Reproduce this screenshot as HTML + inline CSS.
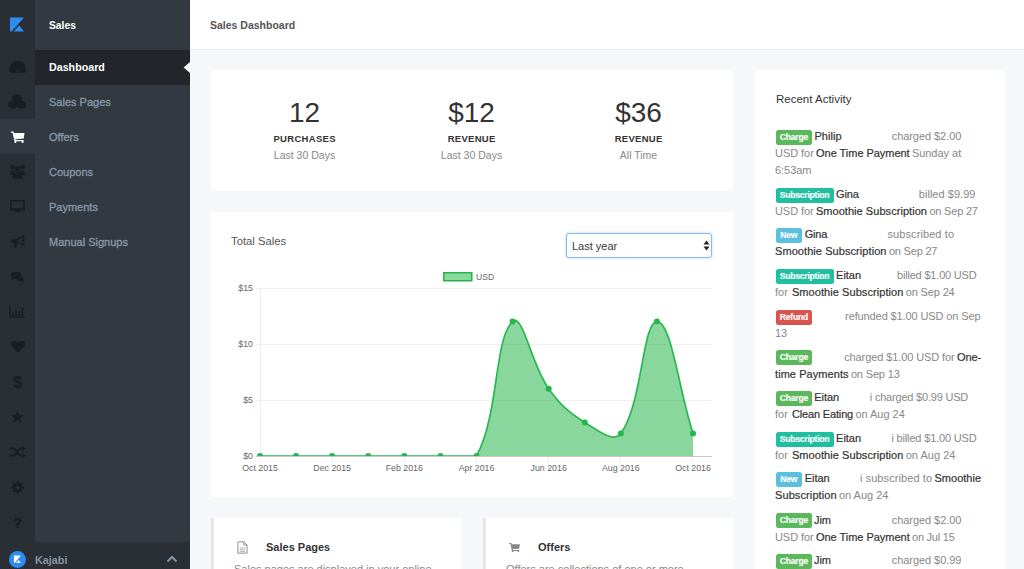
<!DOCTYPE html>
<html><head><meta charset="utf-8">
<style>
*{margin:0;padding:0;box-sizing:border-box}
html,body{width:1024px;height:569px;overflow:hidden;background:#f6f7f8;font-family:"Liberation Sans",sans-serif}
.abs{position:absolute}
#icons{left:0;top:0;width:35px;height:569px;background:#2a2e35}
#sub{left:35px;top:0;width:155px;height:569px;background:#323940}
#activeicon{left:0;top:119px;width:35px;height:35px;background:#323940}
#activerow{left:35px;top:50px;width:155px;height:35px;background:#22262a}
#bottombar{left:0;top:542px;width:190px;height:27px;background:#2a2e35}
.subitem{position:absolute;left:49px;font-size:11px;font-weight:400;color:#8796a6;white-space:nowrap;line-height:12px;-webkit-text-stroke:0.35px #8796a6}
.ico{position:absolute;left:10px;width:15px;height:15px}
#header{left:190px;top:0;width:834px;height:50px;background:#fff;border-bottom:1px solid #eef0f1}
.card{position:absolute;background:#fff;border-radius:2px}
.txt{position:absolute;white-space:nowrap;line-height:12px}
.stat-num{font-size:28px;color:#333;line-height:30px;margin-top:1.5px;text-align:center;width:167px}
.stat-lbl{font-size:9.5px;font-weight:700;color:#333;text-align:center;width:167px;letter-spacing:0.3px;text-indent:0.3px}
.stat-sub{font-size:10.5px;color:#888;text-align:center;width:167px}
.lab{position:absolute;height:15px;margin-top:-0.4px;border-radius:2.5px;color:#fff;font-weight:700;font-size:8.6px;letter-spacing:-0.25px;line-height:15px;text-align:center;-webkit-text-stroke:0.15px #fff}
.g{background:#5cb85c}.t{background:#1fbf9f}.b{background:#5bc0de}.r{background:#d9534f}
.al{position:absolute;font-size:11px;color:#888;white-space:nowrap;line-height:12px}
.al.dk{color:#333;-webkit-text-stroke:0.2px #333}
.ax{font-size:8.8px;color:#666;line-height:10px}
</style></head>
<body>
<div id="icons" class="abs"></div>
<div id="sub" class="abs"></div>
<div id="activeicon" class="abs"></div>
<div id="activerow" class="abs"></div>
<div id="bottombar" class="abs"></div>

<!-- logo -->
<svg class="abs" style="left:0;top:0" width="35" height="50" viewBox="0 0 35 50">
  <polygon points="10,17.4 24,17.4 11.6,31.6 10,31.6" fill="#2b8ef0"/>
  <polygon points="13.6,31.6 24,31.6 19.2,25.6" fill="#2b8ef0"/>
</svg>

<div class="txt" style="left:49px;top:20px;font-size:10.3px;font-weight:700;color:#fff">Sales</div>
<div class="txt" style="left:49px;top:61px;font-size:10.7px;font-weight:700;color:#fff">Dashboard</div>
<svg class="abs" style="left:183px;top:62px" width="7" height="11"><polygon points="7,0 7,11 0.7,5.5" fill="#fff"/></svg>
<div class="subitem" style="top:96px">Sales Pages</div>
<div class="subitem" style="top:131px">Offers</div>
<div class="subitem" style="top:166px">Coupons</div>
<div class="subitem" style="top:201px">Payments</div>
<div class="subitem" style="top:236px">Manual Signups</div>

<!-- bottom bar -->
<div class="abs" style="left:9px;top:551px;width:17px;height:17px;border-radius:50%;background:#2b8ef0"></div>
<svg class="abs" style="left:9px;top:551px" width="17" height="17"><polygon points="5,4.5 12,4.5 5.6,12 5,12" fill="#fff"/><polygon points="7,12 12,12 9.5,9" fill="#fff"/></svg>
<div class="txt" style="left:35px;top:553.5px;font-size:10.8px;font-weight:700;color:#8796a5">Kajabi</div>
<svg class="abs" style="left:166px;top:555px" width="12" height="8"><polyline points="1.5,6.5 6,2 10.5,6.5" fill="none" stroke="#8796a5" stroke-width="2"/></svg>

<!-- icons placeholder -->
<svg class="abs" style="left:0;top:0" width="35" height="569" viewBox="0 0 35 569">
 <g fill="#1a1d22">
  <!-- tachometer -->
  <path d="M10.1,72.7 A8.2,8.2 0 1,1 24.9,72.7 Z"/>
  <!-- cubes -->
  <path d="M17,94 L21.7,96 L21.7,100.2 L17,102.2 L12.3,100.2 L12.3,96 Z"/>
  <path d="M13.1,100.5 L17.8,102.5 L17.8,106.7 L13.1,108.7 L8.399999999999999,106.7 L8.399999999999999,102.5 Z"/>
  <path d="M21.4,100.5 L26.099999999999998,102.5 L26.099999999999998,106.7 L21.4,108.7 L16.7,106.7 L16.7,102.5 Z"/>
  <!-- users -->
  <circle cx="12.5" cy="167" r="2.3"/><circle cx="22.5" cy="167" r="2.3"/><circle cx="17.5" cy="169" r="2.8"/>
  <path d="M9.7,175 Q9.7,170.5 12.5,170.5 Q14.5,170.5 14.8,172 L14.8,174.5 Z"/>
  <path d="M25.3,175 Q25.3,170.5 22.5,170.5 Q20.5,170.5 20.2,172 L20.2,174.5 Z"/>
  <path d="M12.6,178.8 L12.6,175.5 Q12.6,172.5 15.5,172.3 L19.5,172.3 Q22.4,172.5 22.4,175.5 L22.4,178.8 Z"/>
  <!-- desktop -->
  <path d="M10,200 L25,200 L25,210.5 L19.5,210.5 L20,212.3 L15,212.3 L15.5,210.5 L10,210.5 Z M11.6,201.5 L11.6,208.2 L23.4,208.2 L23.4,201.5 Z" fill-rule="evenodd"/>
  <!-- bullhorn -->
  <path d="M10.8,239.5 L14.5,239.5 L23.2,235.8 L24.2,235.8 L24.2,245.5 L23.2,245.5 L17,242.8 L16.5,247.5 L14.5,247.5 L13.5,243 L10.8,243 Z M17.5,240 L17.5,242 L22.6,244 L22.6,237.5 Z" fill-rule="evenodd"/>
  <!-- comments -->
  <ellipse cx="16" cy="275.5" rx="5.4" ry="3.8"/>
  <path d="M11.5,281 L13.2,277.5 L15.5,278.5 Z"/>
  <path d="M21.6,276.5 A4,3.2 0 0,1 23.4,280.5 L24.7,282.5 L21.3,281.5 A5,3 0 0,1 17,279.8 A6.5,4.8 0 0,0 21.6,276.5 Z"/>
  <!-- bar chart -->
  <path d="M9.4,306.2 L10.8,306.2 L10.8,316.4 L25.2,316.4 L25.2,317.8 L9.4,317.8 Z"/>
  <rect x="12.2" y="312.5" width="1.8" height="3.9"/>
  <rect x="15.2" y="309.5" width="1.8" height="6.9"/>
  <rect x="18.4" y="311" width="1.8" height="5.4"/>
  <rect x="21.6" y="307.4" width="1.8" height="9"/>
  <!-- heart -->
  <path d="M17.9,352.8 L11.8,346.6 Q10.8,345.5 10.8,344.3 Q10.8,340.8 14.2,340.8 Q16.3,340.8 17.9,342.8 Q19.5,340.8 21.6,340.8 Q24.9,340.8 24.9,344.3 Q24.9,345.5 23.9,346.6 Z"/>
  <!-- star -->
  <polygon points="17.4,410.5 19.1,415.1 24,415.3 20.1,418.3 21.5,422.9 17.4,420.2 13.3,422.9 14.7,418.3 10.8,415.3 15.7,415.1"/>
  <!-- cog -->
  <path d="M21.99,486.61 L23.73,486.65 L23.73,488.55 L21.99,488.59 L21.37,490.08 L22.57,491.33 L21.23,492.67 L19.98,491.47 L18.49,492.09 L18.45,493.83 L16.55,493.83 L16.51,492.09 L15.02,491.47 L13.77,492.67 L12.43,491.33 L13.63,490.08 L13.01,488.59 L11.27,488.55 L11.27,486.65 L13.01,486.61 L13.63,485.12 L12.43,483.87 L13.77,482.53 L15.02,483.73 L16.51,483.11 L16.55,481.37 L18.45,481.37 L18.49,483.11 L19.98,483.73 L21.23,482.53 L22.57,483.87 L21.37,485.12 Z M17.5,485.5 A2.1,2.1 0 1,0 17.5,489.70000000000005 A2.1,2.1 0 1,0 17.5,485.5 Z" fill-rule="evenodd"/>
 </g>
 <g fill="#262a31"><circle cx="12.6" cy="68.6" r="0.75"/><circle cx="22.4" cy="68.6" r="0.75"/><circle cx="14.1" cy="65.5" r="0.65"/><circle cx="17.5" cy="64" r="0.65"/><circle cx="20.9" cy="65.5" r="0.65"/><path d="M16.4,71.4 L17.5,68 L18.6,71.4 Z"/></g>
 <g fill="none" stroke="#1a1d22">
  <path d="M14.8,375.8 L20.2,375.8" stroke-width="0"/>
 </g>
 <!-- cart (white) -->
 <g fill="#fff">
  <path d="M10.8,131.5 L13.6,131.5 L14,133 L24.5,133 L23.8,138.6 L15.3,139.3 L15.5,140 L23.6,140 L23.6,141.2 L14.4,141.2 L12.6,132.8 L10.8,132.8 Z"/>
  <circle cx="15.4" cy="142" r="1.1"/><circle cx="22.6" cy="142" r="1.1"/>
 </g>
 <!-- random -->
 <g fill="none" stroke="#1a1d22" stroke-width="1.8">
  <path d="M9.8,448.5 L12.8,448.5 Q15,448.5 17,452 Q19,455.7 21.5,455.7 L23,455.7"/>
  <path d="M9.8,455.7 L12.8,455.7 Q15,455.7 17,452 Q19,448.5 21.5,448.5 L23,448.5"/>
 </g>
 <g fill="#1a1d22">
  <polygon points="22.5,445.8 25.5,448.5 22.5,451.2"/>
  <polygon points="22.5,453 25.5,455.7 22.5,458.4"/>
 </g>
</svg>
<div class="txt" style="left:12px;top:373.5px;font-size:16px;line-height:18px;font-weight:700;color:#1a1d22;width:11px;text-align:center">$</div>
<div class="txt" style="left:11px;top:515px;font-size:14px;line-height:16px;font-weight:700;color:#1a1d22;width:13px;text-align:center;-webkit-text-stroke:0.5px #1a1d22">?</div>


<!-- header -->
<div id="header" class="abs"></div>
<div class="txt" style="left:210px;top:19px;font-size:10.5px;font-weight:700;color:#555">Sales Dashboard</div>

<!-- stats card -->
<div class="card" style="left:211px;top:70px;width:522px;height:121px"></div>
<div class="txt stat-num" style="left:221px;top:96px">12</div>
<div class="txt stat-lbl" style="left:221px;top:133px">PURCHASES</div>
<div class="txt stat-sub" style="left:221px;top:149px">Last 30 Days</div>
<div class="txt stat-num" style="left:388px;top:96px">$12</div>
<div class="txt stat-lbl" style="left:388px;top:133px">REVENUE</div>
<div class="txt stat-sub" style="left:388px;top:149px">Last 30 Days</div>
<div class="txt stat-num" style="left:555px;top:96px">$36</div>
<div class="txt stat-lbl" style="left:555px;top:133px">REVENUE</div>
<div class="txt stat-sub" style="left:555px;top:149px">All Time</div>

<!-- chart card -->
<div class="card" style="left:211px;top:212px;width:522px;height:285px"></div>
<div class="txt" style="left:231px;top:235px;font-size:11.3px;color:#555">Total Sales</div>
<div class="abs" style="left:566px;top:233px;width:146px;height:25px;border:1px solid #80bdf0;border-radius:3px;background:#fff;box-shadow:0 0 2.5px rgba(102,175,233,.55)"></div>
<div class="txt" style="left:572px;top:240px;font-size:11px;color:#3a3a3a">Last year</div>
<svg class="abs" style="left:703px;top:240px" width="7" height="11"><polygon points="0.5,4.5 6.5,4.5 3.5,0.5" fill="#222"/><polygon points="0.5,6.5 6.5,6.5 3.5,10.5" fill="#222"/></svg>

<svg class="abs" style="left:211px;top:212px" width="522" height="285" viewBox="211 212 522 285">
  <g stroke="#efefef" stroke-width="1">
    <line x1="256" y1="288.5" x2="712" y2="288.5"/>
    <line x1="256" y1="344.5" x2="712" y2="344.5"/>
    <line x1="256" y1="400.5" x2="712" y2="400.5"/>
    <line x1="260.5" y1="288" x2="260.5" y2="462"/>
  </g>
  <g stroke="#ebebeb" stroke-width="1">
    <line x1="332.5" y1="456" x2="332.5" y2="462"/>
    <line x1="404.5" y1="456" x2="404.5" y2="462"/>
    <line x1="476.5" y1="456" x2="476.5" y2="462"/>
    <line x1="548.5" y1="456" x2="548.5" y2="462"/>
    <line x1="620.5" y1="456" x2="620.5" y2="462"/>
    <line x1="692.5" y1="456" x2="692.5" y2="462"/>
  </g>
  <line x1="256" y1="456.5" x2="712" y2="456.5" stroke="#c8c8c8" stroke-width="1"/>
  <defs><clipPath id="ca"><rect x="200" y="200" width="600" height="256"/></clipPath></defs>
  <g clip-path="url(#ca)">
  <path fill="rgba(39,181,75,0.54)" d="M260,456 C274.43,456 281.65,456 296.08,456 C310.52,456 317.73,456 332.17,456 C346.6,456 353.82,456 368.25,456 C382.68,456 389.9,456 404.33,456 C418.77,456 425.98,456 440.42,456 C454.85,456 470.56,456 476.5,456 C499.42,413.31 493.94,338.96 512.58,321.6 C522.8,312.08 531.13,364.31 548.67,388.8 C560,404.63 568.41,412.25 584.75,422.4 C597.27,430.17 613.82,443.4 620.83,433.6 C642.68,403.08 642.48,321.6 656.92,321.6 C671.35,321.6 678.57,388.8 693,433.6 L693,456 L260,456 Z"/>
  <path fill="none" stroke="#29b850" stroke-width="1.7" d="M260,456 C274.43,456 281.65,456 296.08,456 C310.52,456 317.73,456 332.17,456 C346.6,456 353.82,456 368.25,456 C382.68,456 389.9,456 404.33,456 C418.77,456 425.98,456 440.42,456 C454.85,456 470.56,456 476.5,456 C499.42,413.31 493.94,338.96 512.58,321.6 C522.8,312.08 531.13,364.31 548.67,388.8 C560,404.63 568.41,412.25 584.75,422.4 C597.27,430.17 613.82,443.4 620.83,433.6 C642.68,403.08 642.48,321.6 656.92,321.6 C671.35,321.6 678.57,388.8 693,433.6"/>
  <g fill="#25b64c">
    <circle cx='260' cy='456' r='3'/> <circle cx='296.08' cy='456' r='3'/> <circle cx='332.17' cy='456' r='3'/> <circle cx='368.25' cy='456' r='3'/> <circle cx='404.33' cy='456' r='3'/> <circle cx='440.42' cy='456' r='3'/> <circle cx='476.5' cy='456' r='3'/> <circle cx='512.58' cy='321.6' r='3'/> <circle cx='548.67' cy='388.8' r='3'/> <circle cx='584.75' cy='422.4' r='3'/> <circle cx='620.83' cy='433.6' r='3'/> <circle cx='656.92' cy='321.6' r='3'/> <circle cx='693' cy='433.6' r='3'/>
  </g>
  </g>
  <rect x="443.75" y="272.75" width="28" height="8" fill="#88d99e" stroke="#27b54b" stroke-width="1.5"/>
</svg>
<div class="txt ax" style="left:476px;top:272px;font-size:8.6px">USD</div>
<div class="txt ax" style="left:223px;top:283px;width:30px;text-align:right">$15</div>
<div class="txt ax" style="left:223px;top:339px;width:30px;text-align:right">$10</div>
<div class="txt ax" style="left:223px;top:395px;width:30px;text-align:right">$5</div>
<div class="txt ax" style="left:223px;top:451px;width:30px;text-align:right">$0</div>
<div class="txt ax" style="left:230.0px;top:463px;width:60px;text-align:center">Oct 2015</div>
<div class="txt ax" style="left:302.2px;top:463px;width:60px;text-align:center">Dec 2015</div>
<div class="txt ax" style="left:374.3px;top:463px;width:60px;text-align:center">Feb 2016</div>
<div class="txt ax" style="left:446.5px;top:463px;width:60px;text-align:center">Apr 2016</div>
<div class="txt ax" style="left:518.7px;top:463px;width:60px;text-align:center">Jun 2016</div>
<div class="txt ax" style="left:590.8px;top:463px;width:60px;text-align:center">Aug 2016</div>
<div class="txt ax" style="left:663.0px;top:463px;width:60px;text-align:center">Oct 2016</div>


<!-- activity card -->
<div class="card" style="left:755px;top:70px;width:250px;height:520px"></div>
<div class="txt" style="left:776px;top:93px;font-size:11.5px;color:#333">Recent Activity</div>
<div class="lab g" style="left:775.6px;top:130.2px;width:36.6px">Charge</div>
<div class="lab t" style="left:775.6px;top:188.3px;width:58px">Subscription</div>
<div class="lab b" style="left:775.6px;top:228.3px;width:26.3px">New</div>
<div class="lab t" style="left:775.6px;top:269.4px;width:58px">Subscription</div>
<div class="lab r" style="left:775.6px;top:309.9px;width:36.6px">Refund</div>
<div class="lab g" style="left:775.6px;top:350.8px;width:36.6px">Charge</div>
<div class="lab g" style="left:775.6px;top:391.2px;width:36.6px">Charge</div>
<div class="lab t" style="left:775.6px;top:431.9px;width:58px">Subscription</div>
<div class="lab b" style="left:775.6px;top:472.3px;width:26.3px">New</div>
<div class="lab g" style="left:775.6px;top:513.5px;width:36.6px">Charge</div>
<div class="lab g" style="left:775.6px;top:553.9px;width:36.6px">Charge</div>
<div class="al dk" style="left:814.4px;top:130.2px;letter-spacing:0.08px">Philip</div>
<div class="al" style="left:891.7px;top:130.2px;letter-spacing:-0.06px">charged $2.00</div>
<div class="al" style="left:775.0px;top:147.2px;letter-spacing:-0.05px">USD for</div>
<div class="al dk" style="left:816.1px;top:147.2px;letter-spacing:-0.04px">One Time Payment</div>
<div class="al" style="left:911.9px;top:147.2px;letter-spacing:-0.03px">Sunday at</div>
<div class="al" style="left:775.0px;top:164.2px;letter-spacing:-0.05px">6:53am</div>
<div class="al dk" style="left:836.1px;top:188.3px;letter-spacing:-0.16px">Gina</div>
<div class="al" style="left:918.8px;top:188.3px;letter-spacing:0.03px">billed $9.99</div>
<div class="al" style="left:775.0px;top:205.3px;letter-spacing:-0.07px">USD for</div>
<div class="al dk" style="left:815.9px;top:205.3px;letter-spacing:0.05px">Smoothie Subscription</div>
<div class="al" style="left:929.4px;top:205.3px;letter-spacing:-0.20px">on Sep 27</div>
<div class="al dk" style="left:804.7px;top:228.3px;letter-spacing:-0.16px">Gina</div>
<div class="al" style="left:887.4px;top:228.3px;letter-spacing:0.10px">subscribed to</div>
<div class="al dk" style="left:775.0px;top:245.3px;letter-spacing:0.07px">Smoothie Subscription</div>
<div class="al" style="left:888.9px;top:245.3px;letter-spacing:-0.20px">on Sep 27</div>
<div class="al dk" style="left:836.1px;top:269.4px;letter-spacing:-0.04px">Eitan</div>
<div class="al" style="left:897.0px;top:269.4px;letter-spacing:-0.19px">billed $1.00 USD</div>
<div class="al" style="left:775.0px;top:286.4px;letter-spacing:0.00px">for</div>
<div class="al dk" style="left:791.9px;top:286.4px;letter-spacing:0.07px">Smoothie Subscription</div>
<div class="al" style="left:905.7px;top:286.4px;letter-spacing:-0.14px">on Sep 24</div>
<div class="al" style="left:845.1px;top:309.9px;letter-spacing:-0.11px">refunded $1.00 USD on Sep</div>
<div class="al" style="left:775.0px;top:326.9px">13</div>
<div class="al" style="left:844.2px;top:350.8px;letter-spacing:-0.10px">charged $1.00 USD for</div>
<div class="al dk" style="left:957.0px;top:350.8px;letter-spacing:-0.09px">One-</div>
<div class="al dk" style="left:775.0px;top:367.8px;letter-spacing:0.07px">time Payments</div>
<div class="al" style="left:850.9px;top:367.8px;letter-spacing:-0.16px">on Sep 13</div>
<div class="al dk" style="left:814.3px;top:391.2px;letter-spacing:-0.04px">Eitan</div>
<div class="al" style="left:869.8px;top:391.2px;letter-spacing:-0.20px">i charged $0.99 USD</div>
<div class="al" style="left:775.0px;top:408.2px;letter-spacing:0.00px">for</div>
<div class="al dk" style="left:791.9px;top:408.2px;letter-spacing:-0.15px">Clean Eating</div>
<div class="al" style="left:855.4px;top:408.2px;letter-spacing:-0.02px">on Aug 24</div>
<div class="al dk" style="left:836.1px;top:431.9px;letter-spacing:-0.04px">Eitan</div>
<div class="al" style="left:891.4px;top:431.9px;letter-spacing:-0.16px">i billed $1.00 USD</div>
<div class="al" style="left:775.0px;top:448.9px;letter-spacing:0.00px">for</div>
<div class="al dk" style="left:791.9px;top:448.9px;letter-spacing:0.07px">Smoothie Subscription</div>
<div class="al" style="left:905.7px;top:448.9px;letter-spacing:0.03px">on Aug 24</div>
<div class="al dk" style="left:804.7px;top:472.3px;letter-spacing:-0.04px">Eitan</div>
<div class="al" style="left:859.9px;top:472.3px;letter-spacing:0.09px">i subscribed to</div>
<div class="al dk" style="left:934.5px;top:472.3px;letter-spacing:0.01px">Smoothie</div>
<div class="al dk" style="left:775.0px;top:489.3px;letter-spacing:0.10px">Subscription</div>
<div class="al" style="left:839.0px;top:489.3px;letter-spacing:-0.02px">on Aug 24</div>
<div class="al dk" style="left:813.9px;top:513.5px;letter-spacing:0.00px">Jim</div>
<div class="al" style="left:891.8px;top:513.5px;letter-spacing:-0.06px">charged $2.00</div>
<div class="al" style="left:775.0px;top:530.5px;letter-spacing:-0.07px">USD for</div>
<div class="al dk" style="left:815.9px;top:530.5px;letter-spacing:-0.02px">One Time Payment</div>
<div class="al" style="left:912.0px;top:530.5px;letter-spacing:-0.23px">on Jul 15</div>
<div class="al dk" style="left:813.9px;top:553.9px;letter-spacing:0.00px">Jim</div>
<div class="al" style="left:891.8px;top:553.9px;letter-spacing:-0.06px">charged $0.99</div>
<div class="al" style="left:775.0px;top:570.9px;letter-spacing:-0.07px">USD for</div>
<div class="al dk" style="left:815.9px;top:570.9px;letter-spacing:-0.02px">One Time Payment</div>
<div class="al" style="left:912.0px;top:570.9px;letter-spacing:-0.23px">on Jul 15</div>

<!-- bottom cards -->
<div class="card" style="left:211px;top:518px;width:250px;height:80px;border-left:3px solid #e6e6e6;border-radius:0"></div>
<div class="card" style="left:483px;top:518px;width:250px;height:80px;border-left:3px solid #e6e6e6;border-radius:0"></div>

<svg class="abs" style="left:236.5px;top:540.5px" width="11" height="13" viewBox="0 0 12 14"><path d="M1,0.8 L7.5,0.8 L11,4.3 L11,13.2 L1,13.2 Z M7.5,0.8 L7.5,4.3 L11,4.3" fill="none" stroke="#888" stroke-width="1"/><path d="M3,7.5 L9,7.5 M3,9.5 L9,9.5 M3,11.5 L9,11.5" fill="none" stroke="#999" stroke-width="0.8"/></svg>
<div class="txt" style="left:266px;top:541px;font-size:11px;font-weight:700;color:#333">Sales Pages</div>
<div class="txt" style="left:234px;top:563px;font-size:11px;color:#888">Sales pages are displayed in your online</div>
<svg class="abs" style="left:509px;top:542.5px" width="11" height="9" viewBox="10.8 131.5 13.7 11.5"><g fill="#888"><path d="M10.8,131.5 L13.6,131.5 L14,133.2 L24.5,133.2 L23.6,138.8 L15.2,139.6 L15.4,140.3 L23.6,140.3 L23.6,141.6 L14.3,141.6 L12.5,132.9 L10.8,132.9 Z"/><circle cx="15.3" cy="142.8" r="1.2"/><circle cx="22.5" cy="142.8" r="1.2"/></g></svg>
<div class="txt" style="left:538px;top:541px;font-size:11px;font-weight:700;color:#333">Offers</div>
<div class="txt" style="left:506px;top:563px;font-size:11px;color:#888">Offers are collections of one or more</div>
</body></html>
